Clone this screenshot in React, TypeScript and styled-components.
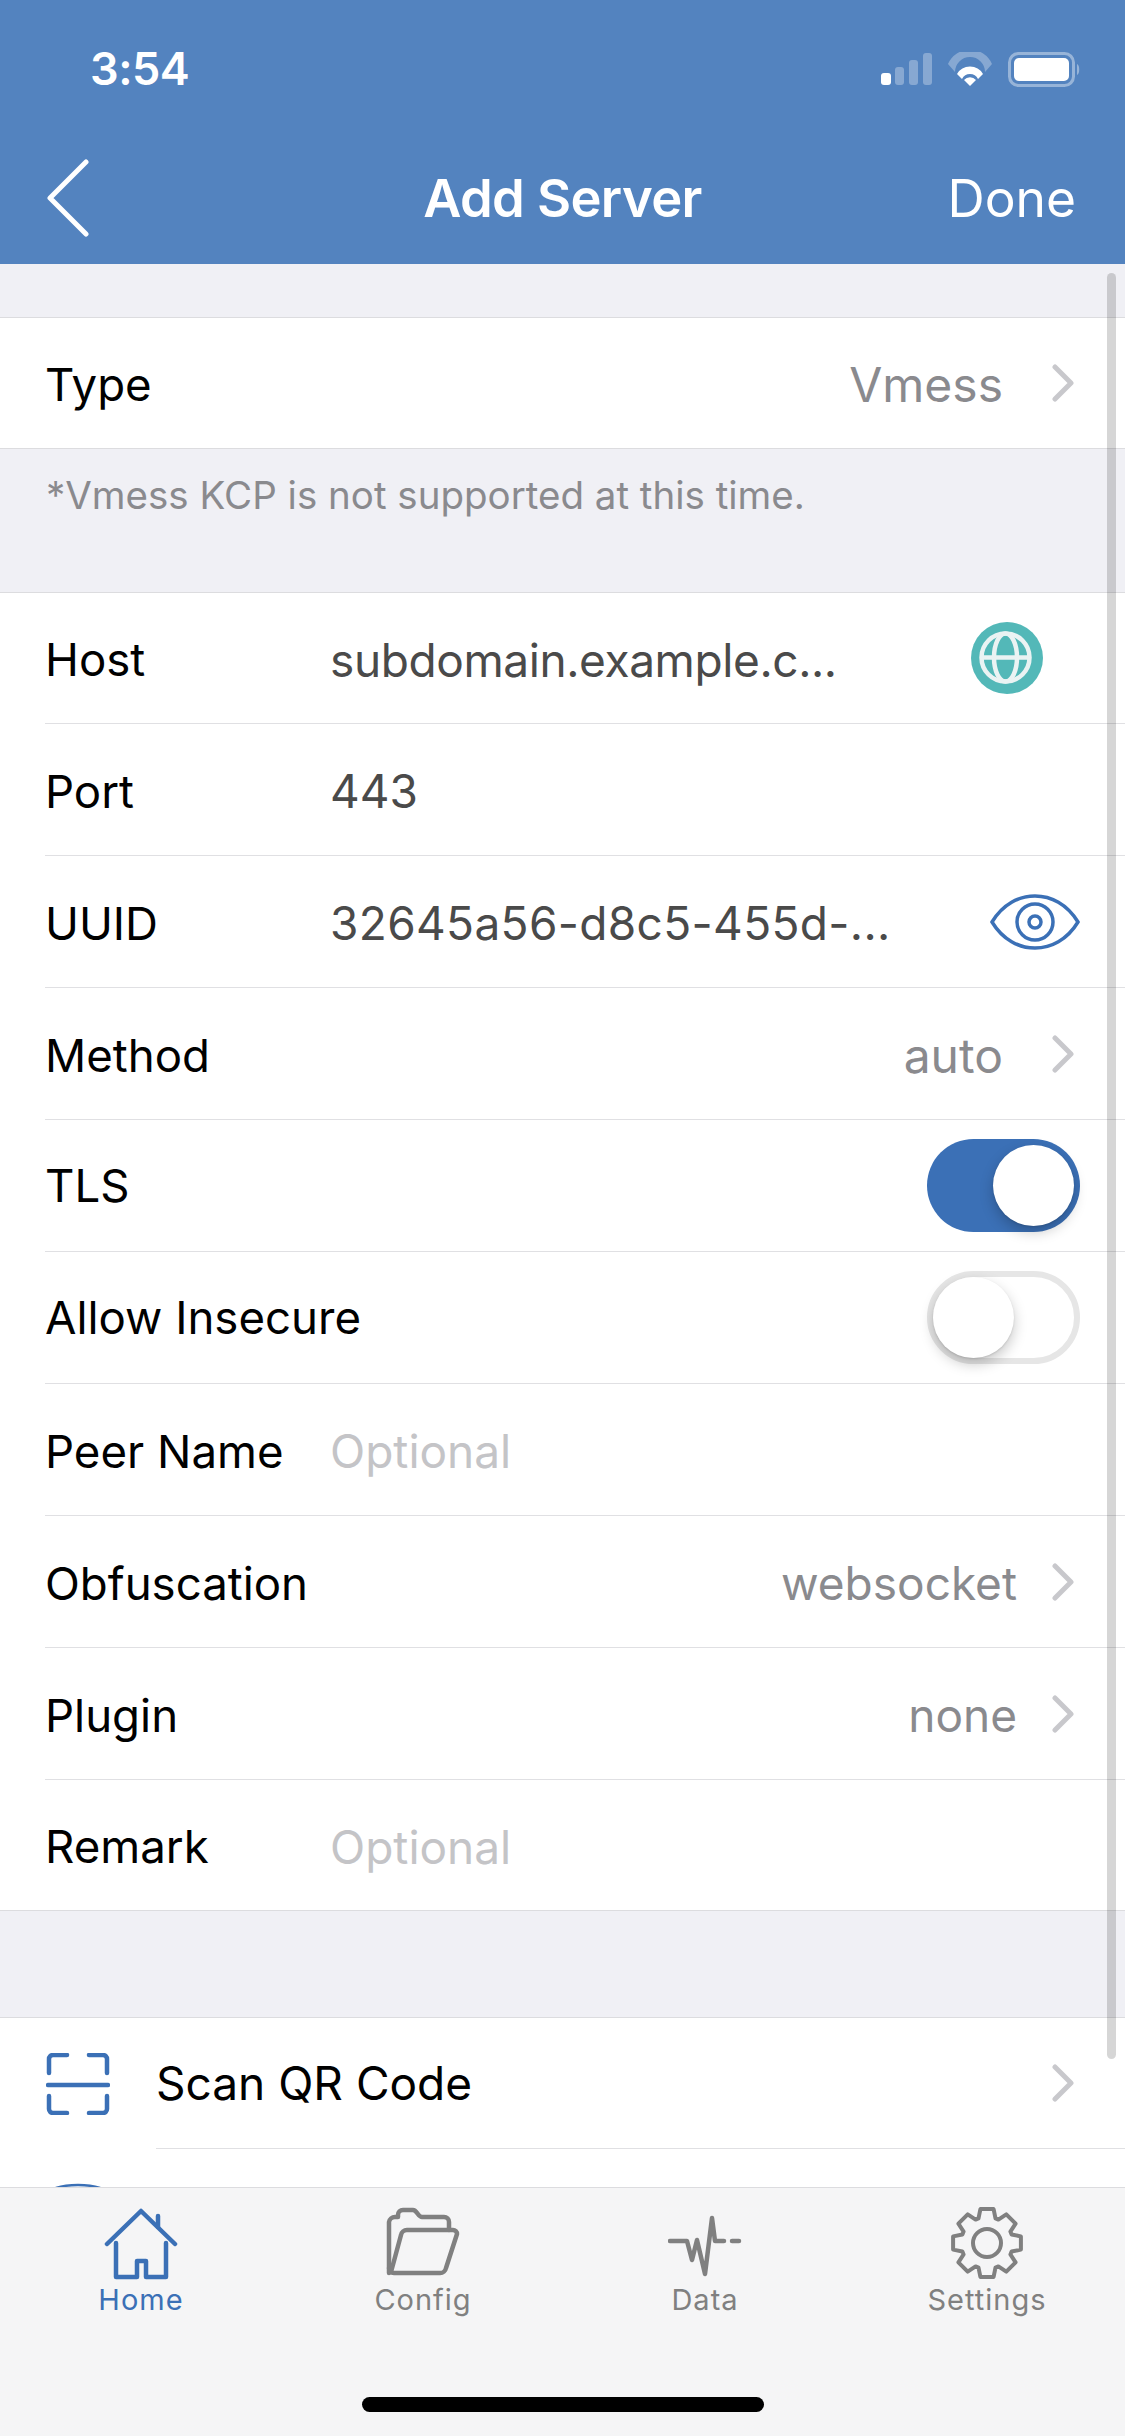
import * as React from "react";
import styled, { createGlobalStyle } from "styled-components";

const BLUE = "#3b70b6";
const GREY_ICON = "#808080";

const Global = createGlobalStyle`
	html, body {
		margin: 0;
		padding: 0;
		background: #f0f0f5;
	}
	* {
		box-sizing: border-box;
	}
`;

const Screen = styled.div`
	position: relative;
	display: flex;
	flex-direction: column;
	width: 1125px;
	height: 2436px;
	overflow: hidden;
	background: #f0f0f5;
	font-family: Inter, "Liberation Sans", sans-serif;
	color: #000;
`;

const Header = styled.header`
	flex: none;
	height: 264px;
	background: #5383bf;
	color: #fff;
	display: flex;
	flex-direction: column;
`;

const StatusBar = styled.div`
	height: 132px;
	padding: 0 44px 0 90px;
	display: flex;
	align-items: flex-start;
	justify-content: space-between;
`;

const Clock = styled.span`
	font-size: 45px;
	font-weight: 600;
	line-height: 50px;
	margin-top: 44px;
	letter-spacing: -0.5px;
`;

const StatusIcons = styled.svg`
	margin-top: 52px;
`;

const NavBar = styled.div`
	height: 132px;
	padding: 0 49px 0 46px;
	display: grid;
	grid-template-columns: 1fr auto 1fr;
	align-items: center;
`;

const BackIcon = styled.svg`
	display: block;
`;

const NavTitle = styled.span`
	font-size: 52.5px;
	font-weight: 600;
	letter-spacing: -0.6px;
	margin-left: 3px;
`;

const NavDone = styled.span`
	justify-self: end;
	font-size: 51.5px;
	font-weight: 400;
`;

const Scroller = styled.main`
	flex: 1;
	overflow: hidden;
	padding-top: 53px;
`;

const Group = styled.section`
	background: #fff;
	border-top: 1px solid #dcdcdf;
	border-bottom: 1px solid #dcdcdf;
`;

const Note = styled.p`
	margin: 0;
	height: 143px;
	padding: 22px 46px 0;
	font-size: 38.5px;
	line-height: 48px;
	color: #8a8a8e;
`;

const Spacer = styled.div`
	height: 106px;
`;

const Row = styled.div`
	height: 132px;
	margin-left: 45px;
	padding-right: 45px;
	display: flex;
	align-items: center;
	border-bottom: 1px solid #e0e0e3;
	&:first-child:not(:last-child) {
		height: 131px;
	}
	&:last-child {
		height: 130px;
		border-bottom: none;
	}
`;

const Label = styled.span<{ $raised?: boolean }>`
	flex: none;
	width: 285px;
	padding-top: ${({ $raised }) => ($raised ? 0 : 3)}px;
	font-size: 45.6px;
	white-space: nowrap;
`;

const Field = styled.span<{ $empty?: boolean; $track?: number }>`
	flex: 1;
	padding-top: 3px;
	font-size: 46px;
	white-space: nowrap;
	letter-spacing: ${({ $track }) => $track ?? 0}px;
	color: ${({ $empty }) => ($empty ? "#c4c4c7" : "#4a4a4a")};
`;

const Picked = styled.span<{ $gap: number; $size?: number }>`
	margin-left: auto;
	margin-right: ${({ $gap }) => $gap}px;
	padding-top: 3px;
	font-size: ${({ $size }) => $size ?? 46}px;
	color: #8a8a8e;
`;

const ChevronIcon = styled.svg`
	flex: none;
	margin-right: 6px;
`;

const GlobeIcon = styled.svg`
	flex: none;
	margin-right: 37px;
`;

const Toggle = styled.span<{ $on?: boolean }>`
	flex: none;
	position: relative;
	margin-left: auto;
	width: 153px;
	height: 93px;
	border-radius: 47px;
	background: ${({ $on }) => ($on ? BLUE : "#fff")};
	border: ${({ $on }) => ($on ? "none" : "6px solid #e6e6e6")};
`;

const Knob = styled.span<{ $on?: boolean }>`
	position: absolute;
	top: ${({ $on }) => ($on ? "6px" : "0")};
	left: ${({ $on }) => ($on ? "66px" : "0")};
	width: 81px;
	height: 81px;
	border-radius: 50%;
	background: #fff;
	box-shadow: 0 6px 14px rgba(0, 0, 0, 0.22), 0 1px 2px rgba(0, 0, 0, 0.12);
`;

const ActionRow = styled.div`
	height: 131px;
	display: flex;
	align-items: center;
`;

const ActionIcon = styled.span`
	flex: none;
	width: 156px;
	padding-left: 46px;
	display: flex;
	align-items: center;
`;

const ActionBody = styled.div<{ $divided?: boolean }>`
	flex: 1;
	height: 100%;
	padding-right: 45px;
	display: flex;
	align-items: center;
	justify-content: space-between;
	font-size: 46px;
	border-bottom: ${({ $divided }) => ($divided ? "1px solid #e0e0e3" : "none")};
`;

const TabBar = styled.nav`
	flex: none;
	position: relative;
	height: 249px;
	background: #f5f5f6;
	border-top: 1px solid #dcdcdf;
	display: grid;
	grid-template-columns: repeat(4, 282px);
	align-items: start;
`;

const Tab = styled.div<{ $active?: boolean }>`
	display: flex;
	flex-direction: column;
	align-items: center;
	padding-top: 18px;
	font-size: 29px;
	letter-spacing: 1px;
	color: ${({ $active }) => ($active ? BLUE : GREY_ICON)};
`;

const TabIcon = styled.svg`
	display: block;
	margin-bottom: 2px;
`;

const HomeBar = styled.div`
	position: absolute;
	left: 362px;
	top: 209px;
	width: 402px;
	height: 15px;
	border-radius: 8px;
	background: #000;
`;

const ScrollThumb = styled.div`
	position: absolute;
	left: 1107px;
	top: 273px;
	width: 9px;
	height: 1786px;
	border-radius: 5px;
	background: rgba(0, 0, 0, 0.16);
`;

// eight rounded teeth around the settings cog
const cogPath = () => {
	const point = (deg: number, r: number) => {
		const a = ((deg - 90) * Math.PI) / 180;
		return `${(37 + r * Math.cos(a)).toFixed(1)} ${(37 + r * Math.sin(a)).toFixed(1)}`;
	};
	const parts: string[] = [];
	for (let i = 0; i < 8; i++) {
		const c = i * 45;
		parts.push(point(c - 19, 26), point(c - 11, 34.5), point(c + 11, 34.5), point(c + 19, 26));
	}
	return `M${parts.join(" L")} Z`;
};

const Chevron = () => (
	<ChevronIcon width="22" height="38" viewBox="0 0 22 38" fill="none">
		<path d="M3 3 L19 19 L3 35" stroke="#c8c8cc" strokeWidth="5" strokeLinecap="round" strokeLinejoin="round" />
	</ChevronIcon>
);

const Status = () => (
	<StatusIcons width="201" height="36" viewBox="0 0 201 36" fill="none">
		<rect x="1" y="21" width="10" height="12" rx="3" fill="#fff" />
		<rect x="15" y="15" width="9" height="18" rx="3" fill="#fff" opacity="0.3" />
		<rect x="29" y="8" width="9" height="25" rx="3" fill="#fff" opacity="0.3" />
		<rect x="43" y="1" width="9" height="32" rx="3" fill="#fff" opacity="0.3" />
		<path d="M68 12 A24 24 0 0 1 112 12 L105 20 A14 14 0 0 0 75 20 Z" fill="#fff" opacity="0.3" />
		<path d="M77 22 A15 15 0 0 1 103 22 L98 27 A9 9 0 0 0 82 27 Z" fill="#fff" />
		<path d="M84 28 A8 8 0 0 1 96 28 L90 34 Z" fill="#fff" />
		<rect x="129.5" y="1.5" width="64" height="32" rx="9" stroke="#fff" strokeOpacity="0.4" strokeWidth="3" />
		<rect x="134" y="6" width="55" height="23" rx="5" fill="#fff" />
		<path d="M197 12 C200 13 200 22 197 23 Z" fill="#fff" opacity="0.4" />
	</StatusIcons>
);

const Globe = () => (
	<GlobeIcon width="72" height="72" viewBox="0 0 72 72" fill="none">
		<circle cx="36" cy="36" r="36" fill="#53b8b8" />
		<g stroke="#eaf3f3" strokeWidth="4.5">
			<circle cx="34.5" cy="35.5" r="24" />
			<ellipse cx="34.5" cy="35.5" rx="11.5" ry="24" />
			<path d="M11 35.5 H58" />
		</g>
	</GlobeIcon>
);

const Eye = () => (
	<svg width="90" height="56" viewBox="0 0 90 56" fill="none">
		<path d="M2 28 C13 10 29 2 45 2 C61 2 77 10 88 28 C77 46 61 54 45 54 C29 54 13 46 2 28 Z" stroke={BLUE} strokeWidth="3.5" />
		<circle cx="45" cy="28" r="18" stroke={BLUE} strokeWidth="3.5" />
		<circle cx="45" cy="28" r="6" stroke={BLUE} strokeWidth="3.5" />
	</svg>
);

const ScanIcon = () => (
	<svg width="64" height="62" viewBox="0 0 64 62" fill="none" stroke={BLUE} strokeWidth="4.5" strokeLinecap="round" strokeLinejoin="round">
		<path d="M3 20 V6 A4 4 0 0 1 7 2 H21" />
		<path d="M43 2 H57 A4 4 0 0 1 61 6 V20" />
		<path d="M3 43 V56 A4 4 0 0 0 7 60 H21" />
		<path d="M43 60 H57 A4 4 0 0 0 61 56 V43" />
		<path d="M2 32 H62" />
	</svg>
);

const ArcIcon = () => (
	<svg width="64" height="64" viewBox="0 0 64 64" fill="none" stroke={BLUE} strokeWidth="2.5">
		<ellipse cx="32" cy="12" rx="31" ry="10" />
	</svg>
);

const HomeIcon = () => (
	<TabIcon width="74" height="74" viewBox="0 0 74 74" fill="none" stroke={BLUE} strokeWidth="4.5" strokeLinecap="round" strokeLinejoin="round">
		<path d="M3 38 L37 5 L71 38" />
		<path d="M54 21 V10" />
		<path d="M12 37 V71 H33 V55 H42 V71 H62 V37" />
	</TabIcon>
);

const FolderIcon = () => (
	<TabIcon width="74" height="74" viewBox="0 0 74 74" fill="none" stroke={GREY_ICON} strokeWidth="4.5" strokeLinejoin="round" strokeLinecap="round">
		<path d="M3 67 V16 A6 6 0 0 1 9 11 H12 V9 A5 5 0 0 1 17 4 H27 C31 4 32 11 36 11 H58 A5 5 0 0 1 63 16 V24" />
		<path d="M5 66 L15 29 A6 6 0 0 1 21 24 H67 A4 4 0 0 1 71 28 L60 62 A6 6 0 0 1 54 67 H8 A5 5 0 0 1 3 62" />
	</TabIcon>
);

const DataIcon = () => (
	<TabIcon width="74" height="74" viewBox="0 0 74 74" fill="none" stroke={GREY_ICON} strokeWidth="4.5" strokeLinecap="round" strokeLinejoin="round">
		<path d="M2 35 H19 L24 54 L29 34 L37 68 L44 12 L47 35 H56" />
		<path d="M64 35 H71" />
	</TabIcon>
);

const GearIcon = () => (
	<TabIcon width="74" height="74" viewBox="0 0 74 74" fill="none" stroke={GREY_ICON} strokeWidth="4">
		<path d={cogPath()} strokeLinejoin="round" />
		<circle cx="37" cy="37" r="14" />
	</TabIcon>
);

const App = () => (
	<Screen>
		<Global />
		<Header>
			<StatusBar>
				<Clock>3:54</Clock>
				<Status />
			</StatusBar>
			<NavBar>
				<BackIcon width="44" height="78" viewBox="0 0 44 78" fill="none">
					<path d="M40 3 L4 39 L40 75" stroke="#fff" strokeWidth="5" strokeLinecap="round" strokeLinejoin="round" />
				</BackIcon>
				<NavTitle>Add Server</NavTitle>
				<NavDone>Done</NavDone>
			</NavBar>
		</Header>

		<Scroller>
			<Group>
				<Row>
					<Label>Type</Label>
					<Picked $gap={49} $size={48}>Vmess</Picked>
					<Chevron />
				</Row>
			</Group>
			<Note>*Vmess KCP is not supported at this time.</Note>
			<Group>
				<Row>
					<Label>Host</Label>
					<Field $track={-0.4}>subdomain.example.c...</Field>
					<Globe />
				</Row>
				<Row>
					<Label>Port</Label>
					<Field>443</Field>
				</Row>
				<Row>
					<Label>UUID</Label>
					<Field $track={0.35}>32645a56-d8c5-455d-...</Field>
					<Eye />
				</Row>
				<Row>
					<Label>Method</Label>
					<Picked $gap={49} $size={48}>auto</Picked>
					<Chevron />
				</Row>
				<Row>
					<Label $raised>TLS</Label>
					<Toggle $on>
						<Knob $on />
					</Toggle>
				</Row>
				<Row>
					<Label $raised>Allow Insecure</Label>
					<Toggle>
						<Knob />
					</Toggle>
				</Row>
				<Row>
					<Label>Peer Name</Label>
					<Field $empty>Optional</Field>
				</Row>
				<Row>
					<Label>Obfuscation</Label>
					<Picked $gap={35}>websocket</Picked>
					<Chevron />
				</Row>
				<Row>
					<Label>Plugin</Label>
					<Picked $gap={35}>none</Picked>
					<Chevron />
				</Row>
				<Row>
					<Label>Remark</Label>
					<Field $empty>Optional</Field>
				</Row>
			</Group>
			<Spacer />
			<Group>
				<ActionRow>
					<ActionIcon>
						<ScanIcon />
					</ActionIcon>
					<ActionBody $divided>
						Scan QR Code
						<Chevron />
					</ActionBody>
				</ActionRow>
				<ActionRow>
					<ActionIcon>
						<ArcIcon />
					</ActionIcon>
					<ActionBody />
				</ActionRow>
			</Group>
		</Scroller>

		<TabBar>
			<Tab $active>
				<HomeIcon />
				Home
			</Tab>
			<Tab>
				<FolderIcon />
				Config
			</Tab>
			<Tab>
				<DataIcon />
				Data
			</Tab>
			<Tab>
				<GearIcon />
				Settings
			</Tab>
			<HomeBar />
		</TabBar>
		<ScrollThumb />
	</Screen>
);

export default App;
